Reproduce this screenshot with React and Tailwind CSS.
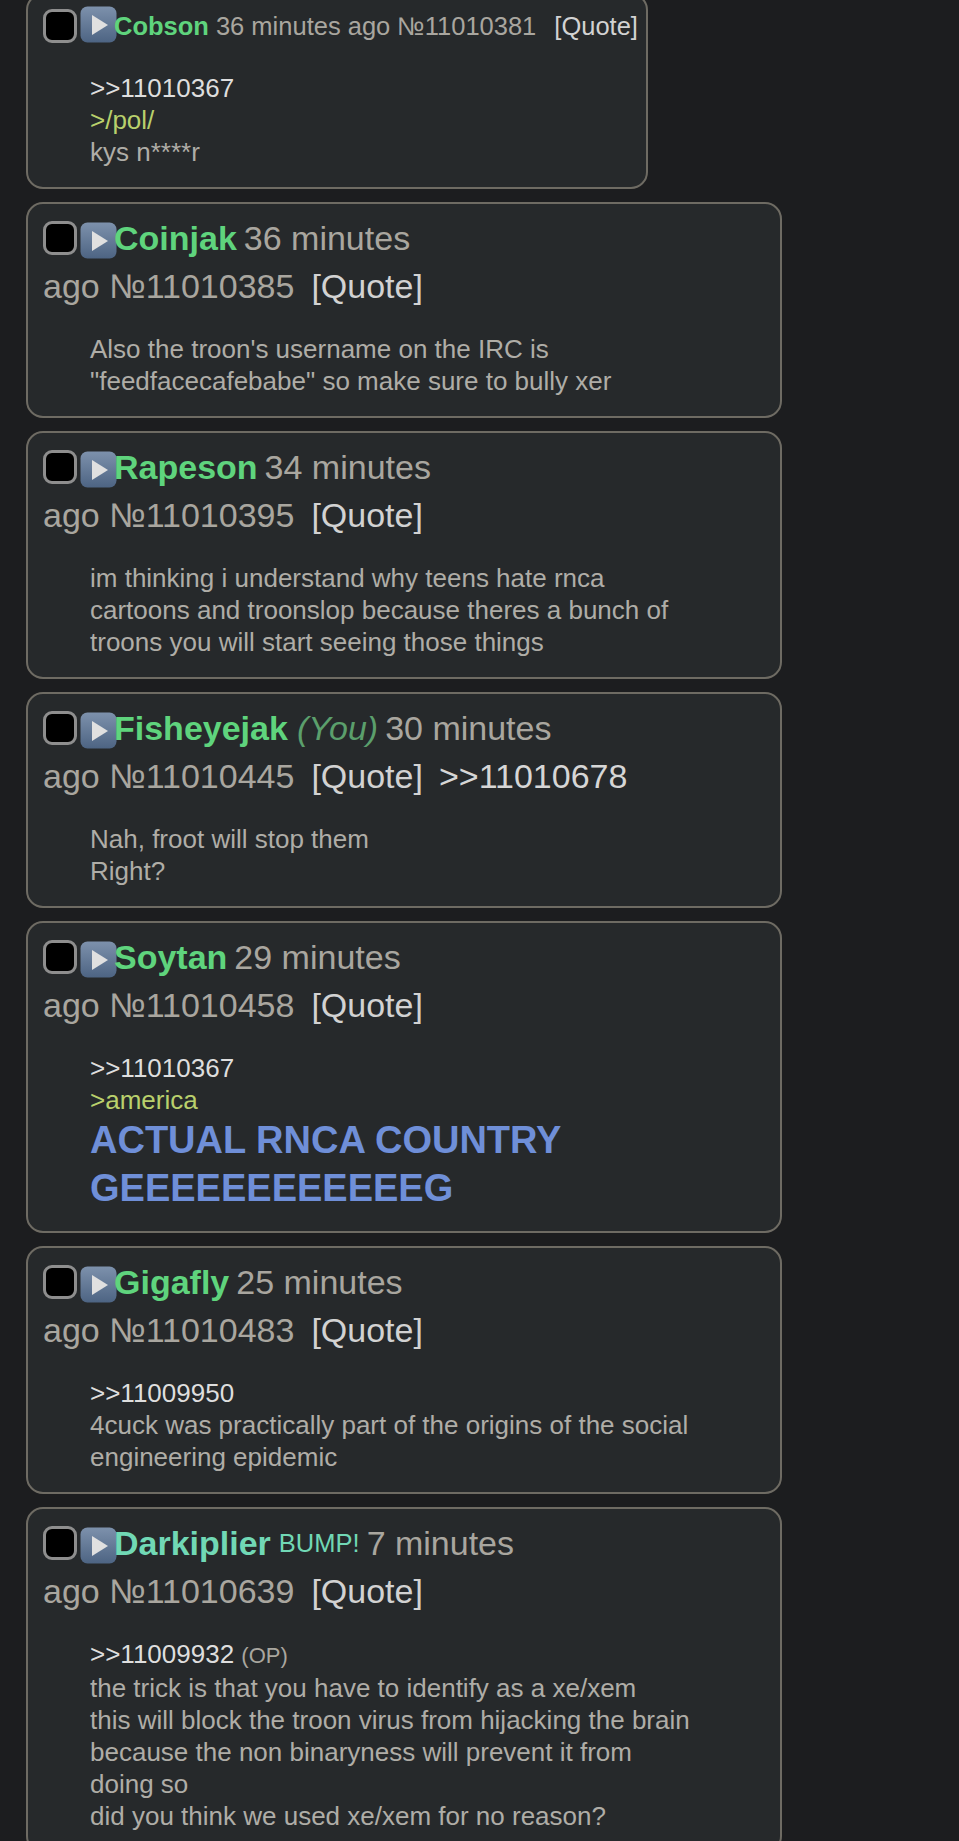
import React from 'react'

const POSTS = [
  {
    name: 'Cobson', time: '36 minutes ago', no: '11010381', compact: true,
    body: [
      { k: 'link', v: '>>11010367' },
      { k: 'green', v: '>/pol/' },
      { k: 'text', v: 'kys n****r' },
    ],
  },
  {
    name: 'Coinjak', time: '36 minutes', no: '11010385',
    body: [
      { k: 'text', v: "Also the troon's username on the IRC is" },
      { k: 'text', v: '"feedfacecafebabe" so make sure to bully xer' },
    ],
  },
  {
    name: 'Rapeson', time: '34 minutes', no: '11010395',
    body: [
      { k: 'text', v: 'im thinking i understand why teens hate rnca' },
      { k: 'text', v: 'cartoons and troonslop because theres a bunch of' },
      { k: 'text', v: 'troons you will start seeing those things' },
    ],
  },
  {
    name: 'Fisheyejak', you: true, time: '30 minutes', no: '11010445', reply: '>>11010678',
    body: [
      { k: 'text', v: 'Nah, froot will stop them' },
      { k: 'text', v: 'Right?' },
    ],
  },
  {
    name: 'Soytan', time: '29 minutes', no: '11010458',
    body: [
      { k: 'link', v: '>>11010367' },
      { k: 'green', v: '>america' },
      { k: 'big', v: 'ACTUAL RNCA COUNTRY' },
      { k: 'big', v: 'GEEEEEEEEEEEEG' },
    ],
  },
  {
    name: 'Gigafly', time: '25 minutes', no: '11010483',
    body: [
      { k: 'link', v: '>>11009950' },
      { k: 'text', v: '4cuck was practically part of the origins of the social' },
      { k: 'text', v: 'engineering epidemic' },
    ],
  },
  {
    name: 'Darkiplier', bump: true, time: '7 minutes', no: '11010639',
    body: [
      { k: 'op', v: '>>11009932' },
      { k: 'text', v: 'the trick is that you have to identify as a xe/xem' },
      { k: 'text', v: 'this will block the troon virus from hijacking the brain' },
      { k: 'text', v: 'because the non binaryness will prevent it from' },
      { k: 'text', v: 'doing so' },
      { k: 'text', v: 'did you think we used xe/xem for no reason?' },
    ],
  },
]

function Check() {
  return <span className="block w-[34px] h-[34px] rounded-[9px] border-[3px] border-[#8e8e8e] bg-black shrink-0" />
}

function Play() {
  return (
    <svg width="37" height="37" viewBox="0 0 37 37" className="shrink-0 ml-[3px] mt-[4px]">
      <defs>
        <linearGradient id="pg" x1="0" y1="0" x2="0" y2="1">
          <stop offset="0" stopColor="#7d91ac" />
          <stop offset="1" stopColor="#4d6483" />
        </linearGradient>
      </defs>
      <rect x="0.5" y="0.5" width="36" height="36" rx="7" fill="url(#pg)" />
      <path d="M12 9 L28 19 L12 29 Z" fill="#e0e0e0" />
    </svg>
  )
}

function Line({ l }) {
  if (l.k === 'link') return <div className="text-[#dedede]">{l.v}</div>
  if (l.k === 'green') return <div className="text-[#b9d06c]">{l.v}</div>
  if (l.k === 'big') return <div className="text-[38px] leading-[48px] font-bold text-[#6f8fd8]">{l.v}</div>
  if (l.k === 'op') return (
    <div className="text-[#dedede]">{l.v} <span className="text-[22px] text-[#a9a69f]">(OP)</span></div>
  )
  return <div>{l.v}</div>
}

function Post({ p }) {
  const nameColor = p.bump ? 'text-[#71d8b5]' : 'text-[#5fd47d]'
  return (
    <div className={`rounded-[17px] border-2 border-[#6e6b63] bg-[#26292b] pl-[15px] pr-4 pb-[19px] ${p.compact ? 'w-[622px] pt-[14px]' : 'w-[756px] pt-[10px]'}`}>
      {p.compact ? (
        <div className="flex items-center h-[34px] text-[25.5px] whitespace-nowrap">
          <Check />
          <span className="-mt-[8px]"><Play /></span>
          <span className="font-bold text-[#5fd47d] -ml-[3px]">{p.name}</span>
          <span className="ml-[7px] text-[#a9a69f]">{p.time} №{p.no}</span>
          <span className="ml-[18px] text-[#d2d2d2]">[Quote]</span>
        </div>
      ) : (
        <div className="text-[34px] leading-[48px] text-[#a9a69f] whitespace-nowrap">
          <div className="flex items-center h-[48px]">
            <Check />
            <Play />
            <span className={`font-bold -ml-[3px] ${nameColor}`}>{p.name}</span>
            {p.you && <span className="ml-[9px] italic text-[#5b9f6c]">(You)</span>}
            {p.bump && <span className="ml-[8px] text-[25.5px] text-[#71d8b5]">BUMP!</span>}
            <span className="ml-[7px]">{p.time}</span>
          </div>
          <div className="h-[48px]">
            <span>ago №{p.no}</span>
            <span className="ml-[17px] text-[#d2d2d2]">[Quote]</span>
            {p.reply && <span className="ml-[16px] text-[#d6d6d6]">{p.reply}</span>}
          </div>
        </div>
      )}
      <div className={`ml-[47px] text-[26px] leading-[32px] text-[#afada7] whitespace-nowrap ${p.compact ? 'mt-[29px]' : 'mt-[23px]'}`}>
        {p.body.map((l, i) => <Line key={i} l={l} />)}
      </div>
    </div>
  )
}

export default function App() {
  return (
    <div className="h-[1841px] overflow-hidden bg-[#1c1d1f] font-['Liberation_Sans',Arial,sans-serif]">
      <div className="pl-[26px] -mt-[7px] flex flex-col gap-[13px]">
        {POSTS.map((p, i) => <Post key={i} p={p} />)}
      </div>
    </div>
  )
}
